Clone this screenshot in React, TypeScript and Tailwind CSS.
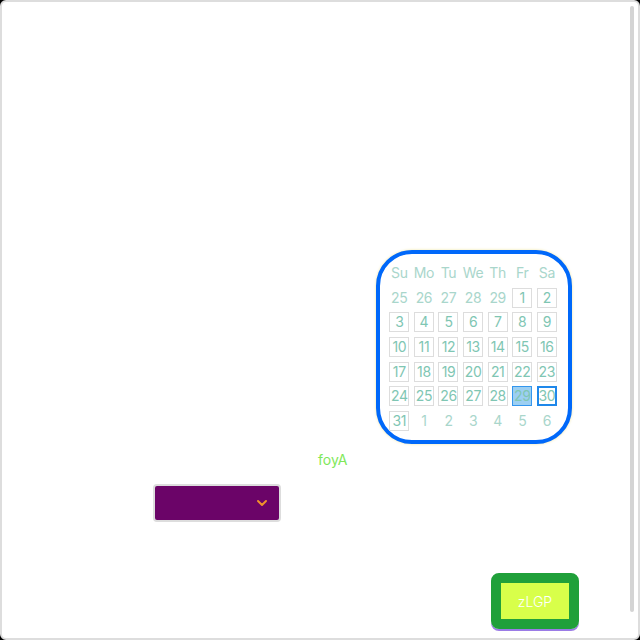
import { ChevronDown } from 'lucide-react';

const HEADERS = ['Su', 'Mo', 'Tu', 'We', 'Th', 'Fr', 'Sa'];

type Day = { n: number; inMonth: boolean };

const days: Day[] = [
  ...[25, 26, 27, 28, 29].map((n) => ({ n, inMonth: false })),
  ...Array.from({ length: 31 }, (_, i) => ({ n: i + 1, inMonth: true })),
  ...[1, 2, 3, 4, 5, 6].map((n) => ({ n, inMonth: false }))
];

function DayCell({ day }: { day: Day }) {
  if (!day.inMonth) {
    return <div className="flex h-[24.6px] items-center justify-center text-[#a9d6cb]">{day.n}</div>;
  }
  let box = 'border border-[#dddddd] bg-white';
  if (day.n === 29) box = 'border border-[#3396ee] bg-[#9ccff2]';
  if (day.n === 30) box = 'border-2 border-[#1f88ea] bg-white';
  return (
    <div className="flex h-[24.6px] items-center justify-center">
      <span className={`flex h-[20px] w-[20px] items-center justify-center text-[#7fc6b3] ${box}`}>{day.n}</span>
    </div>
  );
}

function Calendar() {
  return (
    <div className="ml-[374px] h-[194px] w-[196px] rounded-[36px] border-4 border-[#0068fa] bg-white pl-[7px] pt-[7px] shadow-[0_0_3px_#efe4a0]">
      <div className="grid grid-cols-[repeat(7,24.6px)] text-[14px] leading-none tracking-tight">
        {HEADERS.map((h) => (
          <div key={h} className="flex h-[24.6px] items-center justify-center text-[#a9d6cb]">
            {h}
          </div>
        ))}
        {days.map((d, i) => (
          <DayCell key={i} day={d} />
        ))}
      </div>
    </div>
  );
}

export default function App() {
  return (
    <div className="h-[640px] w-[640px] bg-black font-['Inter',sans-serif]">
      <div className="flex h-full w-full rounded-[6px] border-2 border-[#dddddd] bg-white">
        <div className="flex flex-1 flex-col pt-[248px]">
          <Calendar />
          <p className="ml-[316px] mt-[6px] text-[14px] leading-[20px] text-[#7fe85a]">foyA</p>
          <div className="ml-[151px] mt-[14px] flex h-[38px] w-[128px] items-center justify-end rounded-[4px] border-2 border-[#dddddd] bg-[#6b0468] pr-[9px]">
            <ChevronDown size={16} strokeWidth={3} className="text-[#f0922c]" />
          </div>
          <div className="ml-[489px] mt-[51px] w-[88px] rounded-[8px] border-[10px] border-[#20a03a] shadow-[0_2px_0_#9b7ce6]">
            <div className="flex h-[36px] items-center justify-center bg-[#d8ff4a] text-[14px] font-light text-white">zLGP</div>
          </div>
        </div>
        <div className="mb-[26px] mr-[4px] mt-[4px] w-[4px] rounded-full bg-[#d4d4d4]" />
      </div>
    </div>
  );
}
